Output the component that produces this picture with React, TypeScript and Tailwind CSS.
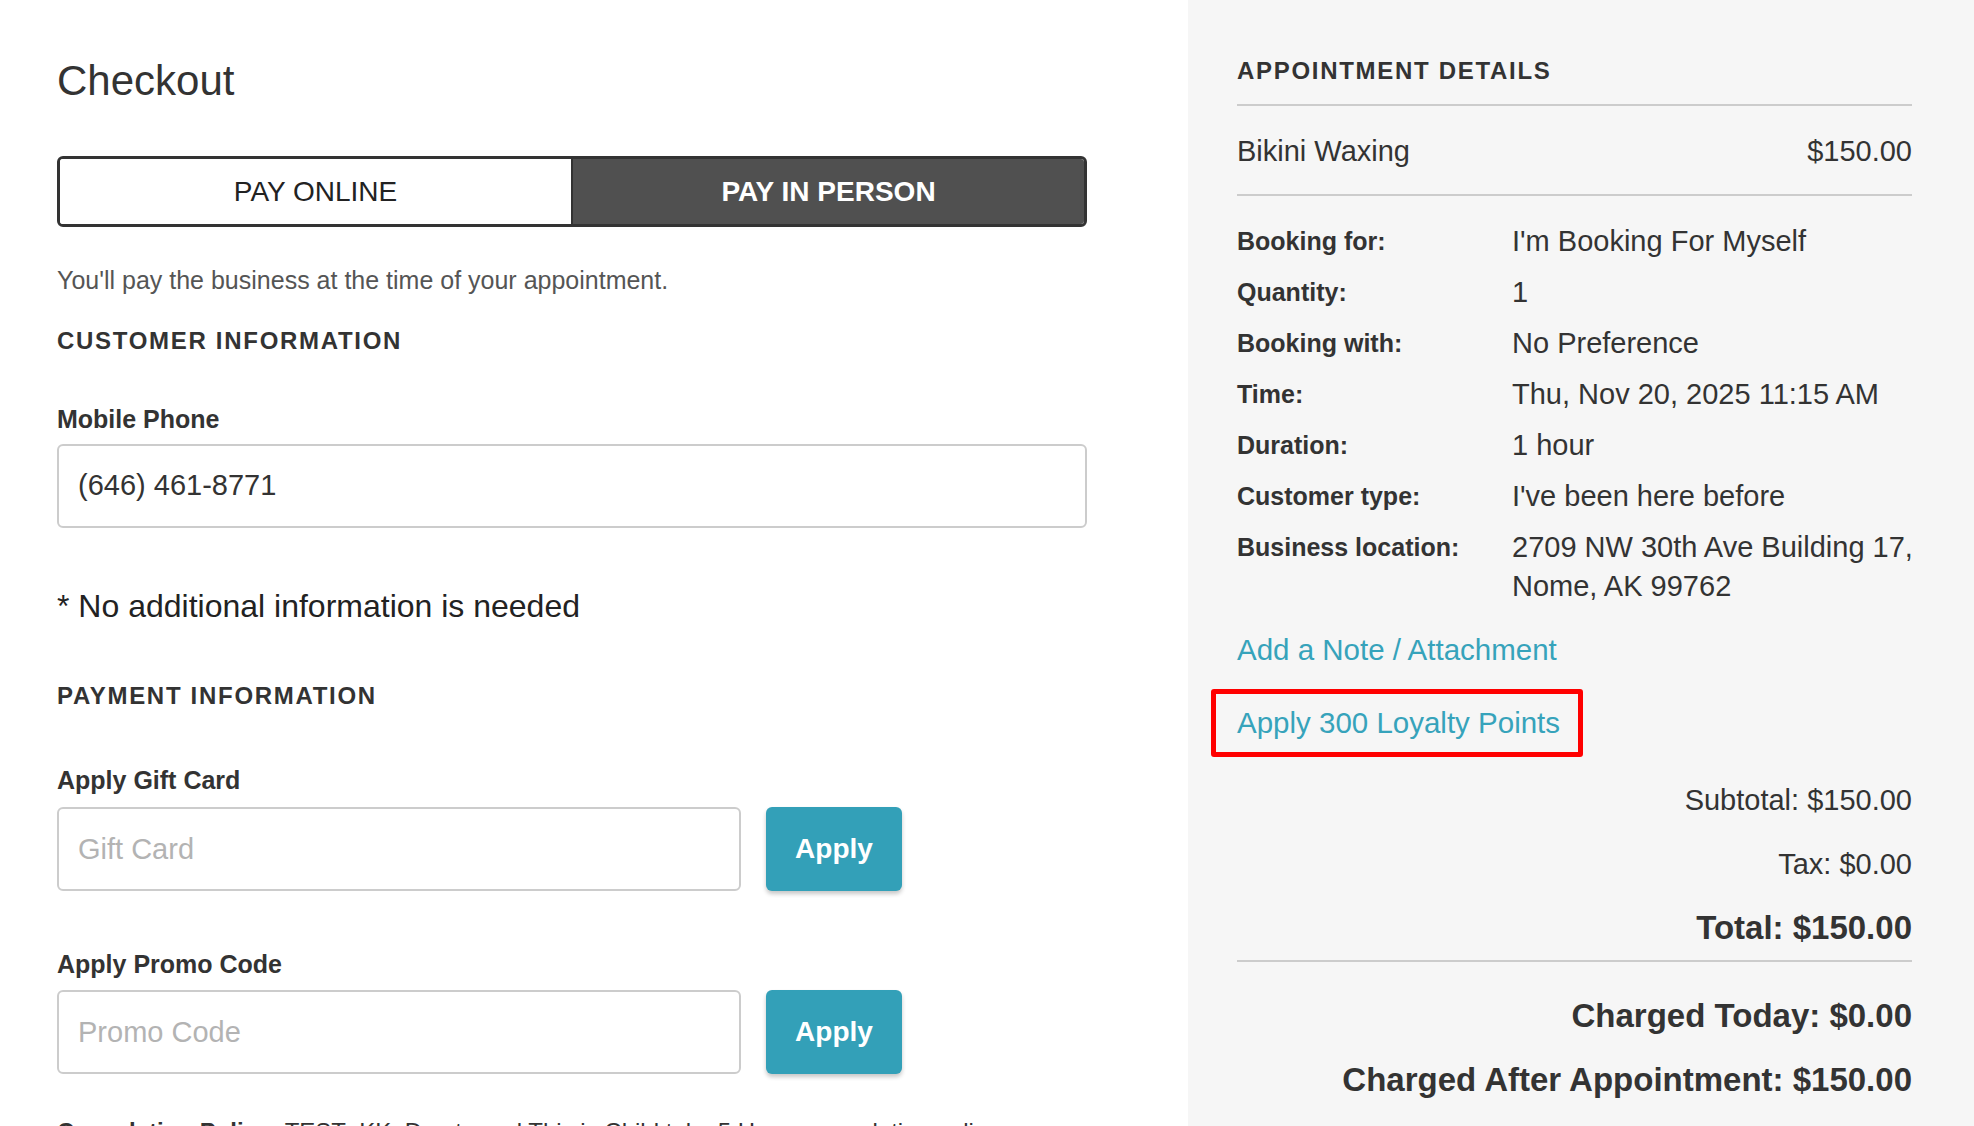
const FONT = { fontFamily: '"Liberation Sans", Arial, Helvetica, sans-serif' };

const details = [
  { label: 'Booking for:', value: ["I'm Booking For Myself"] },
  { label: 'Quantity:', value: ['1'] },
  { label: 'Booking with:', value: ['No Preference'] },
  { label: 'Time:', value: ['Thu, Nov 20, 2025 11:15 AM'] },
  { label: 'Duration:', value: ['1 hour'] },
  { label: 'Customer type:', value: ["I've been here before"] },
  { label: 'Business location:', value: ['2709 NW 30th Ave Building 17,', 'Nome, AK 99762'] },
];

function SectionTitle({ children, className = '' }: { children: React.ReactNode; className?: string }) {
  return (
    <h2 className={`text-[24px] leading-[30px] font-bold tracking-[1.7px] text-[#333] ${className}`}>{children}</h2>
  );
}

function FieldLabel({ children, className = '' }: { children: React.ReactNode; className?: string }) {
  return <label className={`block text-[25px] leading-[30px] font-bold text-[#333] ${className}`}>{children}</label>;
}

function CodeRow({ placeholder }: { placeholder: string }) {
  return (
    <div className="flex gap-[25px]">
      <input
        placeholder={placeholder}
        className="w-[684px] h-[84px] rounded-[6px] border-2 border-[#cccccc] bg-white px-[19px] text-[29px] text-[#333] placeholder:text-[#b3b3b3] outline-none"
      />
      <button className="w-[136px] h-[84px] rounded-[6px] bg-[#33a0b8] text-white text-[28px] font-bold shadow-[0_3px_4px_rgba(0,0,0,0.22)]">
        Apply
      </button>
    </div>
  );
}

export default function App() {
  return (
    <div style={FONT} className="flex h-[1126px] w-full overflow-hidden bg-white text-[#333]">
      {/* checkout form */}
      <div className="w-[1188px] shrink-0 pl-[57px] pt-[57px]">
        <div className="w-[1030px]">
          <h1 className="text-[42px] leading-[48px] text-[#333]">Checkout</h1>

          <div className="mt-[51px] flex h-[71px] overflow-hidden rounded-[6px] border-[3px] border-[#333]">
            <button className="flex-1 bg-white text-[28px] text-[#222] border-r-2 border-[#333]">PAY ONLINE</button>
            <button className="flex-1 bg-[#505050] text-[28px] font-bold text-white">PAY IN PERSON</button>
          </div>

          <p className="mt-[38px] text-[25px] leading-[30px] text-[#555]">
            You'll pay the business at the time of your appointment.
          </p>

          <SectionTitle className="mt-[31px]">CUSTOMER INFORMATION</SectionTitle>

          <FieldLabel className="mt-[48px]">Mobile Phone</FieldLabel>
          <div className="mt-[10px] flex h-[84px] items-center rounded-[6px] border-2 border-[#cccccc] bg-white px-[19px] text-[29px] text-[#333]">
            (646) 461-8771
          </div>

          <p className="mt-[60px] text-[32px] leading-[36px] text-[#222]">* No additional information is needed</p>

          <SectionTitle className="mt-[57px]">PAYMENT INFORMATION</SectionTitle>

          <FieldLabel className="mt-[54px]">Apply Gift Card</FieldLabel>
          <div className="mt-[12px]">
            <CodeRow placeholder="Gift Card" />
          </div>

          <FieldLabel className="mt-[58px]">Apply Promo Code</FieldLabel>
          <div className="mt-[11px]">
            <CodeRow placeholder="Promo Code" />
          </div>

          <p className="mt-[43px] text-[24px] leading-[30px] text-[#333] whitespace-nowrap">
            <b>Cancelation Policy:</b> TEST_KK: Due to and This is Child take 5 Hours cancelation policy
          </p>
        </div>
      </div>

      {/* appointment summary */}
      <div className="flex-1 bg-[#f6f6f6] pl-[49px] pt-[56px]">
        <div className="w-[675px]">
          <SectionTitle>APPOINTMENT DETAILS</SectionTitle>
          <div className="mt-[18px] h-[2px] bg-[#cccccc]" />

          <div className="mt-[27px] flex justify-between text-[29px] leading-[36px]">
            <span>Bikini Waxing</span>
            <span>$150.00</span>
          </div>
          <div className="mt-[25px] h-[2px] bg-[#cccccc]" />

          <div className="mt-[26px] flex flex-col gap-[12px]">
            {details.map(d => (
              <div key={d.label} className="flex">
                <span className="w-[275px] shrink-0 text-[25px] leading-[39px] font-bold">{d.label}</span>
                <div className="flex flex-col">
                  {d.value.map(line => (
                    <span key={line} className="text-[29px] leading-[39px] whitespace-nowrap">{line}</span>
                  ))}
                </div>
              </div>
            ))}
          </div>

          <a className="mt-[26px] block text-[29.5px] leading-[36px] text-[#36a3bb]">Add a Note / Attachment</a>

          <div className="mt-[21px] -ml-[26px] w-[372px] rounded-[3px] border-[5px] border-[#ff0000] py-[11px] pl-[21px]">
            <a className="block text-[29.5px] leading-[36px] text-[#36a3bb] whitespace-nowrap">Apply 300 Loyalty Points</a>
          </div>

          <div className="text-right">
            <p className="mt-[25px] text-[29px] leading-[36px]">Subtotal: $150.00</p>
            <p className="mt-[28px] text-[29px] leading-[36px]">Tax: $0.00</p>
            <p className="mt-[27px] text-[33px] leading-[38px] font-bold">Total: $150.00</p>
          </div>
          <div className="mt-[13px] h-[2px] bg-[#cccccc]" />
          <div className="text-right">
            <p className="mt-[35px] text-[33px] leading-[38px] font-bold">Charged Today: $0.00</p>
            <p className="mt-[26px] text-[33px] leading-[38px] font-bold">Charged After Appointment: $150.00</p>
          </div>
        </div>
      </div>
    </div>
  );
}
